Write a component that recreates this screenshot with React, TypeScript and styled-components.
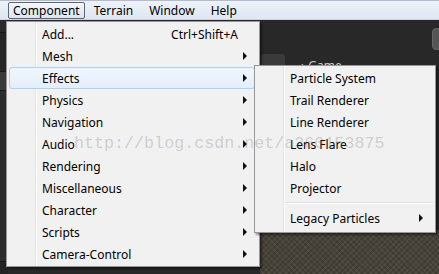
import styled, { createGlobalStyle } from "styled-components";

const Global = createGlobalStyle`
  html, body { margin: 0; padding: 0; background: #262626; }
  body { font-family: "Noto Sans", "Open Sans", sans-serif; }
`;

const Screen = styled.div`
  position: relative;
  width: 439px;
  height: 274px;
  overflow: hidden;
  background: #282828;
  display: flex;
  flex-direction: column;
`;

const MenuBar = styled.div`
  height: 20px;
  flex: none;
  display: flex;
  align-items: center;
  padding-left: 8px;
  gap: 2px;
  box-sizing: border-box;
  border-top: 1px solid #b4bccb;
  border-bottom: 1px solid #c9d3e3;
  background: linear-gradient(#eef2f9, #dfe7f3);
`;

const BarItem = styled.div<{ active?: boolean }>`
  height: 17px;
  display: flex;
  align-items: center;
  padding: 0 ${(p) => (p.active ? 4 : 6)}px;
  font-size: 12px;
  color: #000;
  box-sizing: border-box;
  border-radius: 2px;
  border: 1px solid ${(p) => (p.active ? "#5d6775" : "transparent")};
  background: ${(p) => (p.active ? "linear-gradient(#f4f7fb, #dde4ef)" : "transparent")};
`;

const Workspace = styled.div`
  flex: 1;
  display: flex;
`;

const LeftDock = styled.div`
  width: 8px;
  display: flex;
  flex-direction: column;
  background: #232323;
`;

const DockStrip = styled.div<{ h: number; tone: string }>`
  height: ${(p) => p.h}px;
  background: ${(p) => p.tone};
  border-bottom: 1px solid #1a1a1a;
`;

const MainArea = styled.div`
  flex: 1;
  display: flex;
  flex-direction: column;
  background: #282828;
`;

const TopPanel = styled.div`
  height: 33px;
  flex: none;
  display: flex;
  justify-content: flex-end;
  align-items: flex-start;
  padding-top: 8px;
  box-sizing: border-box;
`;

const RoundKnob = styled.div`
  width: 8px;
  height: 20px;
  margin-right: -3px;
  border-radius: 4px;
  background: #555;
  border: 1px solid #666;
`;

const TabRow = styled.div`
  height: 12px;
  flex: none;
  display: flex;
  align-items: flex-end;
  padding-left: 253px;
  gap: 13px;
  overflow: hidden;
`;

const Tab = styled.div`
  width: 24px;
  height: 11px;
  border-radius: 3px 3px 0 0;
  background: #3a3a3a;
`;

const TabLabel = styled.div`
  display: flex;
  align-items: flex-start;
  gap: 3px;
  height: 6px;
  color: #c8c8c8;
  font-size: 12px;
  line-height: 14px;
`;

const SceneView = styled.div`
  flex: 1;
  display: flex;
  flex-direction: column;
  justify-content: flex-end;
`;

const Texture = styled.div`
  height: 44px;
  margin-left: 252px;
  background-color: #474238;
  background-image: repeating-linear-gradient(45deg, rgba(0,0,0,0.12) 0 2px, transparent 2px 4px),
    repeating-linear-gradient(-45deg, rgba(255,255,255,0.05) 0 2px, transparent 2px 4px);
`;

const Menu = styled.div<{ left: number; top: number; width: number; height: number }>`
  position: absolute;
  left: ${(p) => p.left}px;
  top: ${(p) => p.top}px;
  width: ${(p) => p.width}px;
  height: ${(p) => p.height}px;
  box-sizing: border-box;
  border: 1px solid #979797;
  background: linear-gradient(to right, #f1f1f1 0 28px, #e2e3e3 28px 29px, #ffffff 29px 30px, #f1f1f1 30px);
  box-shadow: 2px 2px 2px rgba(0, 0, 0, 0.45);
  padding: 1px 0 2px;
  display: flex;
  flex-direction: column;
`;

const Row = styled.div<{ hot?: boolean }>`
  height: 22px;
  flex: none;
  margin: 0 4px 0 2px;
  padding: 0 7px 0 32px;
  box-sizing: border-box;
  display: flex;
  align-items: center;
  font-size: 12px;
  color: #000;
  border-radius: 3px;
  border: 1px solid ${(p) => (p.hot ? "#a9d1f5" : "transparent")};
  background: ${(p) => (p.hot ? "linear-gradient(#f1f6fd, #e3eefb)" : "transparent")};
`;

const Label = styled.span`
  flex: 1;
  white-space: nowrap;
`;

const Shortcut = styled.span`
  margin-right: 9px;
  white-space: nowrap;
`;

const Arrow = styled.span`
  width: 0;
  height: 0;
  border-top: 4px solid transparent;
  border-bottom: 4px solid transparent;
  border-left: 4px solid #111;
`;

const Separator = styled.div`
  height: 8px;
  flex: none;
  margin-left: 30px;
  margin-right: 2px;
  display: flex;
  align-items: center;
  &::after {
    content: "";
    flex: 1;
    height: 1px;
    background: #e0e0e0;
    border-bottom: 1px solid #fff;
  }
`;

const Watermark = styled.div`
  position: absolute;
  left: 74px;
  top: 134px;
  font-family: "Liberation Mono", monospace;
  font-size: 16.7px;
  color: rgba(120, 120, 120, 0.3);
  white-space: nowrap;
  pointer-events: none;
`;

const mainItems = [
  "Mesh",
  "Effects",
  "Physics",
  "Navigation",
  "Audio",
  "Rendering",
  "Miscellaneous",
  "Character",
  "Scripts",
  "Camera-Control",
];

const effects = ["Particle System", "Trail Renderer", "Line Renderer", "Lens Flare", "Halo", "Projector"];

export default function App() {
  return (
    <Screen>
      <Global />
      <MenuBar>
        <BarItem active>Component</BarItem>
        <BarItem>Terrain</BarItem>
        <BarItem>Window</BarItem>
        <BarItem>Help</BarItem>
      </MenuBar>
      <Workspace>
        <LeftDock>
          <DockStrip h={12} tone="#2a2a2a" />
          <DockStrip h={38} tone="#262626" />
          <DockStrip h={18} tone="#3a3a3a" />
          <DockStrip h={170} tone="#2c2c2c" />
        </LeftDock>
        <MainArea>
          <TopPanel>
            <RoundKnob />
          </TopPanel>
          <TabRow>
            <Tab />
            <TabLabel>
              <span>◖</span>
              <span>Game</span>
            </TabLabel>
          </TabRow>
          <SceneView>
            <Texture />
          </SceneView>
        </MainArea>
      </Workspace>

      <Menu left={6} top={21} width={254} height={246}>
        <Row>
          <Label>Add...</Label>
          <Shortcut>Ctrl+Shift+A</Shortcut>
        </Row>
        {mainItems.map((m) => (
          <Row key={m} hot={m === "Effects"}>
            <Label>{m}</Label>
            <Arrow />
          </Row>
        ))}
      </Menu>

      <Menu left={254} top={65} width={182} height={168}>
        {effects.map((e) => (
          <Row key={e}>
            <Label>{e}</Label>
          </Row>
        ))}
        <Separator />
        <Row>
          <Label>Legacy Particles</Label>
          <Arrow />
        </Row>
      </Menu>

      <Watermark>http://blog.csdn.net/a360153875</Watermark>
    </Screen>
  );
}
